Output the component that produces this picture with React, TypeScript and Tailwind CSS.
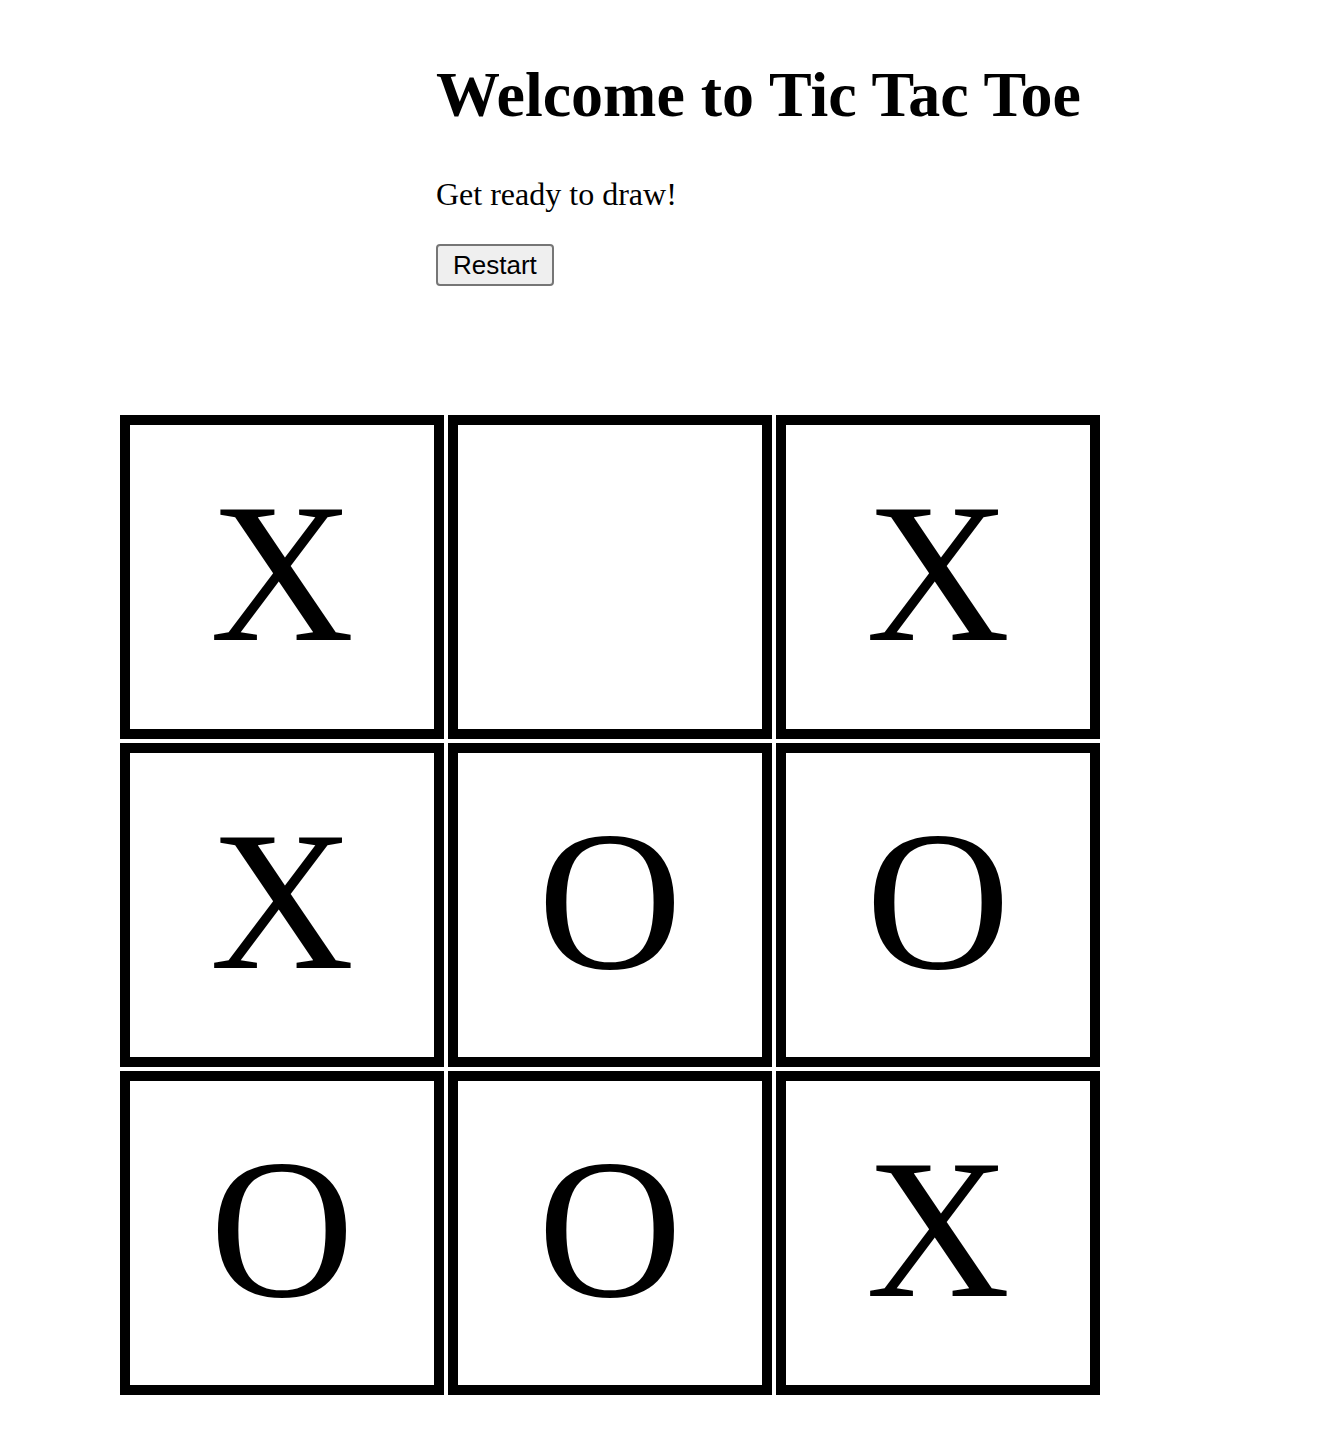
const board = ['X', '', 'X', 'X', 'O', 'O', 'O', 'O', 'X'];

export default function App() {
    return (
        <div className="min-h-screen bg-white text-black font-['Liberation_Serif',serif]">
            <div className="ml-[436px] pt-[63px]">
                <h1 className="text-[64px] leading-[64px] font-bold">Welcome to Tic Tac Toe</h1>
                <p className="mt-[51px] text-[32px] leading-[32px]">Get ready to draw!</p>
                <button className="mt-[34px] h-[42px] px-[15px] border-2 border-[#767676] rounded-[4px] bg-[#efefef] font-['Liberation_Sans',Arial,sans-serif] text-[26px] leading-none">
                    Restart
                </button>
            </div>

            {/* board */}
            <div className="ml-[120px] mt-[129px] grid grid-cols-[repeat(3,324px)] gap-1 w-max pb-8">
                {board.map((v, i) => (
                    <div
                        key={i}
                        className="w-[324px] h-[324px] border-[10px] border-black box-border flex items-center justify-center pb-[8px] text-[200px] leading-[200px]"
                    >
                        {v}
                    </div>
                ))}
            </div>
        </div>
    );
}
